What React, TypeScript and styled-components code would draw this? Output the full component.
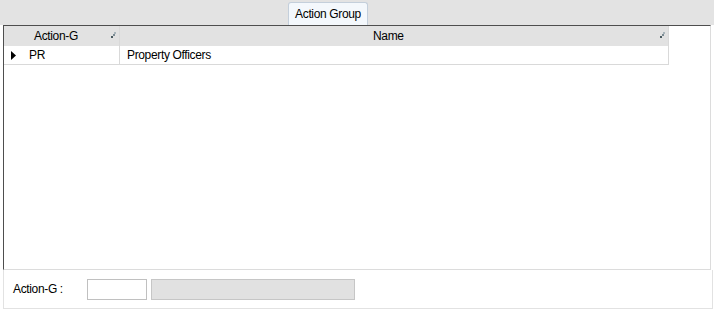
import styled, { createGlobalStyle } from "styled-components";

const GlobalStyle = createGlobalStyle`
  html, body {
    margin: 0;
    padding: 0;
    background: #ffffff;
  }
  body {
    font-family: "Liberation Sans", Arial, sans-serif;
    font-size: 12px;
    letter-spacing: -0.35px;
    color: #000000;
  }
`;

const Window = styled.div`
  width: 714px;
  height: 310px;
  background: #ffffff;
  display: flex;
  flex-direction: column;
  overflow: hidden;
`;

const TabStrip = styled.div`
  height: 25px;
  background: #e3e3e3;
  display: flex;
  align-items: flex-end;
  padding-left: 288px;
  box-sizing: border-box;
`;

const Tab = styled.div`
  width: 80px;
  height: 23px;
  box-sizing: border-box;
  background: #f4f8fc;
  border: 1px solid #c4cfdb;
  border-bottom: none;
  border-radius: 3px 3px 0 0;
  display: flex;
  align-items: center;
  justify-content: center;
  padding-bottom: 1px;
`;

const GridPanel = styled.div`
  height: 245px;
  margin: 0 3px;
  box-sizing: border-box;
  border-top: 1px solid #4e4e4e;
  border-left: 1px solid #4e4e4e;
  border-right: 1px solid #dcdcdc;
  border-bottom: 1px solid #dcdcdc;
  background: #ffffff;
`;

const Table = styled.div`
  width: 665px;
  display: flex;
  flex-direction: column;
`;

const Row = styled.div<{ $header?: boolean }>`
  display: grid;
  grid-template-columns: 18px 98px 548px;
  box-sizing: border-box;
  height: ${(p) => (p.$header ? "20px" : "19px")};
  background: ${(p) => (p.$header ? "#e2e2e2" : "#ffffff")};
  border-bottom: ${(p) => (p.$header ? "none" : "1px solid #d9d9d9")};
  border-right: 1px solid #d9d9d9;
`;

const RowHead = styled.div`
  display: flex;
  align-items: center;
  padding-left: 7px;
`;

const Cell = styled.div<{ $first?: boolean; $indent?: number }>`
  position: relative;
  display: flex;
  align-items: center;
  padding-left: ${(p) => p.$indent ?? 7}px;
  border-right: ${(p) => (p.$first ? "1px solid #d9d9d9" : "none")};
  white-space: nowrap;
`;

const Pin = styled.svg`
  position: absolute;
  right: 3px;
  top: 6px;
`;

const FormBar = styled.div`
  flex: 1;
  margin: 0 1px 1px 3px;
  box-sizing: border-box;
  border: 1px solid #e2e2e2;
  border-top: none;
  display: flex;
  align-items: center;
  padding-left: 9px;
  gap: 4px;
`;

const Label = styled.span`
  width: 70px;
`;

const Field = styled.div<{ $width: number; $disabled?: boolean }>`
  width: ${(p) => p.$width}px;
  height: 21px;
  box-sizing: border-box;
  border: 1px solid ${(p) => (p.$disabled ? "#c6c6c6" : "#c0c0c0")};
  background: ${(p) => (p.$disabled ? "#e1e1e1" : "#ffffff")};
`;

const PinIcon = () => (
  <Pin width="5" height="7" viewBox="0 0 5 7">
    <rect x="3" y="0" width="2" height="2" fill="#a8b4ba" />
    <rect x="2" y="2" width="2" height="2" fill="#7d8c94" />
    <rect x="0" y="4" width="2" height="2" fill="#4a5a60" />
  </Pin>
);

const App = () => {
  return (
    <Window>
      <GlobalStyle />
      <TabStrip>
        <Tab>Action Group</Tab>
      </TabStrip>
      <GridPanel>
        <Table>
          <Row $header>
            <RowHead />
            <Cell $first $indent={12}>
              Action-G
              <PinIcon />
            </Cell>
            <Cell $indent={253}>
              Name
              <PinIcon />
            </Cell>
          </Row>
          <Row>
            <RowHead>
              <svg width="5" height="9" viewBox="0 0 5 9">
                <path d="M0 0 L5 4.5 L0 9 Z" fill="#000" />
              </svg>
            </RowHead>
            <Cell $first>PR</Cell>
            <Cell>Property Officers</Cell>
          </Row>
        </Table>
      </GridPanel>
      <FormBar>
        <Label>Action-G :</Label>
        <Field $width={60} />
        <Field $width={204} $disabled />
      </FormBar>
    </Window>
  );
};

export default App;
